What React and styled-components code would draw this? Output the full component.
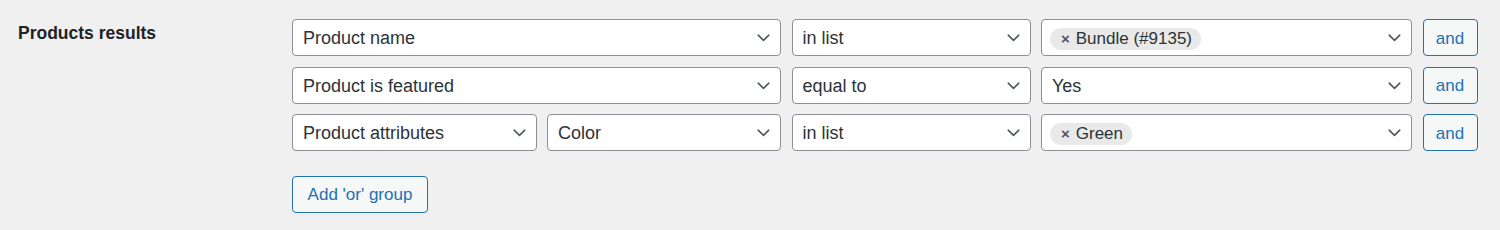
import styled, { createGlobalStyle } from "styled-components";

const GlobalStyle = createGlobalStyle`
  body {
    margin: 0;
    background: #f0f0f1;
    font-family: "Liberation Sans", Arial, sans-serif;
    color: #2c3338;
  }
`;

const rules = [
  {
    fields: [{ text: "Product name", width: 489 }],
    operator: "in list",
    value: { chips: ["Bundle (#9135)"] },
  },
  {
    fields: [{ text: "Product is featured", width: 489 }],
    operator: "equal to",
    value: { text: "Yes" },
  },
  {
    fields: [
      { text: "Product attributes", width: 244.5 },
      { text: "Color", width: 234 },
    ],
    operator: "in list",
    value: { chips: ["Green"] },
  },
];

const Chevron = () => (
  <ChevronIcon viewBox="0 0 13 8" width="13" height="8">
    <polyline points="1.2,1.2 6.5,6.3 11.8,1.2" />
  </ChevronIcon>
);

const Select = ({ width, children }) => (
  <SelectBox $w={width}>
    <SelectValue>{children}</SelectValue>
    <Chevron />
  </SelectBox>
);

const App = () => {
  return (
    <>
      <GlobalStyle />
      <Page>
        <Label>Products results</Label>
        <Rules>
          {rules.map((rule, i) => (
            <Row key={i}>
              {rule.fields.map((f) => (
                <Select key={f.text} width={f.width}>
                  {f.text}
                </Select>
              ))}
              <Select width={239}>{rule.operator}</Select>
              <Select width={371}>
                {rule.value.chips
                  ? rule.value.chips.map((c) => (
                      <Chip key={c}>
                        <ChipX>×</ChipX>
                        {c}
                      </Chip>
                    ))
                  : rule.value.text}
              </Select>
              <AndButton>and</AndButton>
            </Row>
          ))}
          <AddButton>Add 'or' group</AddButton>
        </Rules>
      </Page>
    </>
  );
};

export default App;

const Page = styled.div`
  display: grid;
  grid-template-columns: 274px 1fr;
  padding: 19px 0 0 18px;
  height: 230px;
  box-sizing: border-box;
`;

const Label = styled.div`
  font-weight: 700;
  font-size: 17.5px;
  line-height: 24px;
  color: #1d2327;
  margin-top: 2px;
`;

const Rules = styled.div`
  display: flex;
  flex-direction: column;
  gap: 10.5px;
`;

const Row = styled.div`
  display: flex;
  gap: 10.5px;
`;

const SelectBox = styled.div`
  flex: 0 0 ${(p) => p.$w}px;
  box-sizing: border-box;
  height: 37px;
  display: flex;
  align-items: center;
  background: #fff;
  border: 1px solid #8c8f94;
  border-radius: 4px;
  padding: 0 10px 0 10px;
  font-size: 18px;
  color: #2c3338;
  overflow: hidden;
`;

const SelectValue = styled.div`
  flex: 1;
  display: flex;
  align-items: center;
  white-space: nowrap;
  padding-top: 2px;
`;

const ChevronIcon = styled.svg`
  flex: none;
  fill: none;
  stroke: #50575e;
  stroke-width: 1.6;
  stroke-linecap: round;
  stroke-linejoin: round;
  margin-top: 1px;
`;

const Chip = styled.span`
  display: inline-flex;
  align-items: center;
  gap: 6px;
  height: 22px;
  margin: 0 0 0 -2px;
  padding: 0 9px 0 11px;
  border-radius: 11px;
  background: #e9e9e9;
  font-size: 17px;
  color: #2c3338;
`;

const ChipX = styled.span`
  font-weight: 700;
  font-size: 15px;
  color: #50575e;
`;

const Button = styled.button`
  box-sizing: border-box;
  height: 37px;
  border: 1px solid #2271b1;
  border-radius: 4px;
  background: #f6f7f7;
  color: #2271b1;
  font-family: "Liberation Sans", Arial, sans-serif;
  font-size: 17px;
  padding: 2px 0 0;
  cursor: pointer;
`;

const AndButton = styled(Button)`
  flex: 0 0 55px;
`;

const AddButton = styled(Button)`
  align-self: flex-start;
  width: 136px;
  margin-top: 14px;
`;
